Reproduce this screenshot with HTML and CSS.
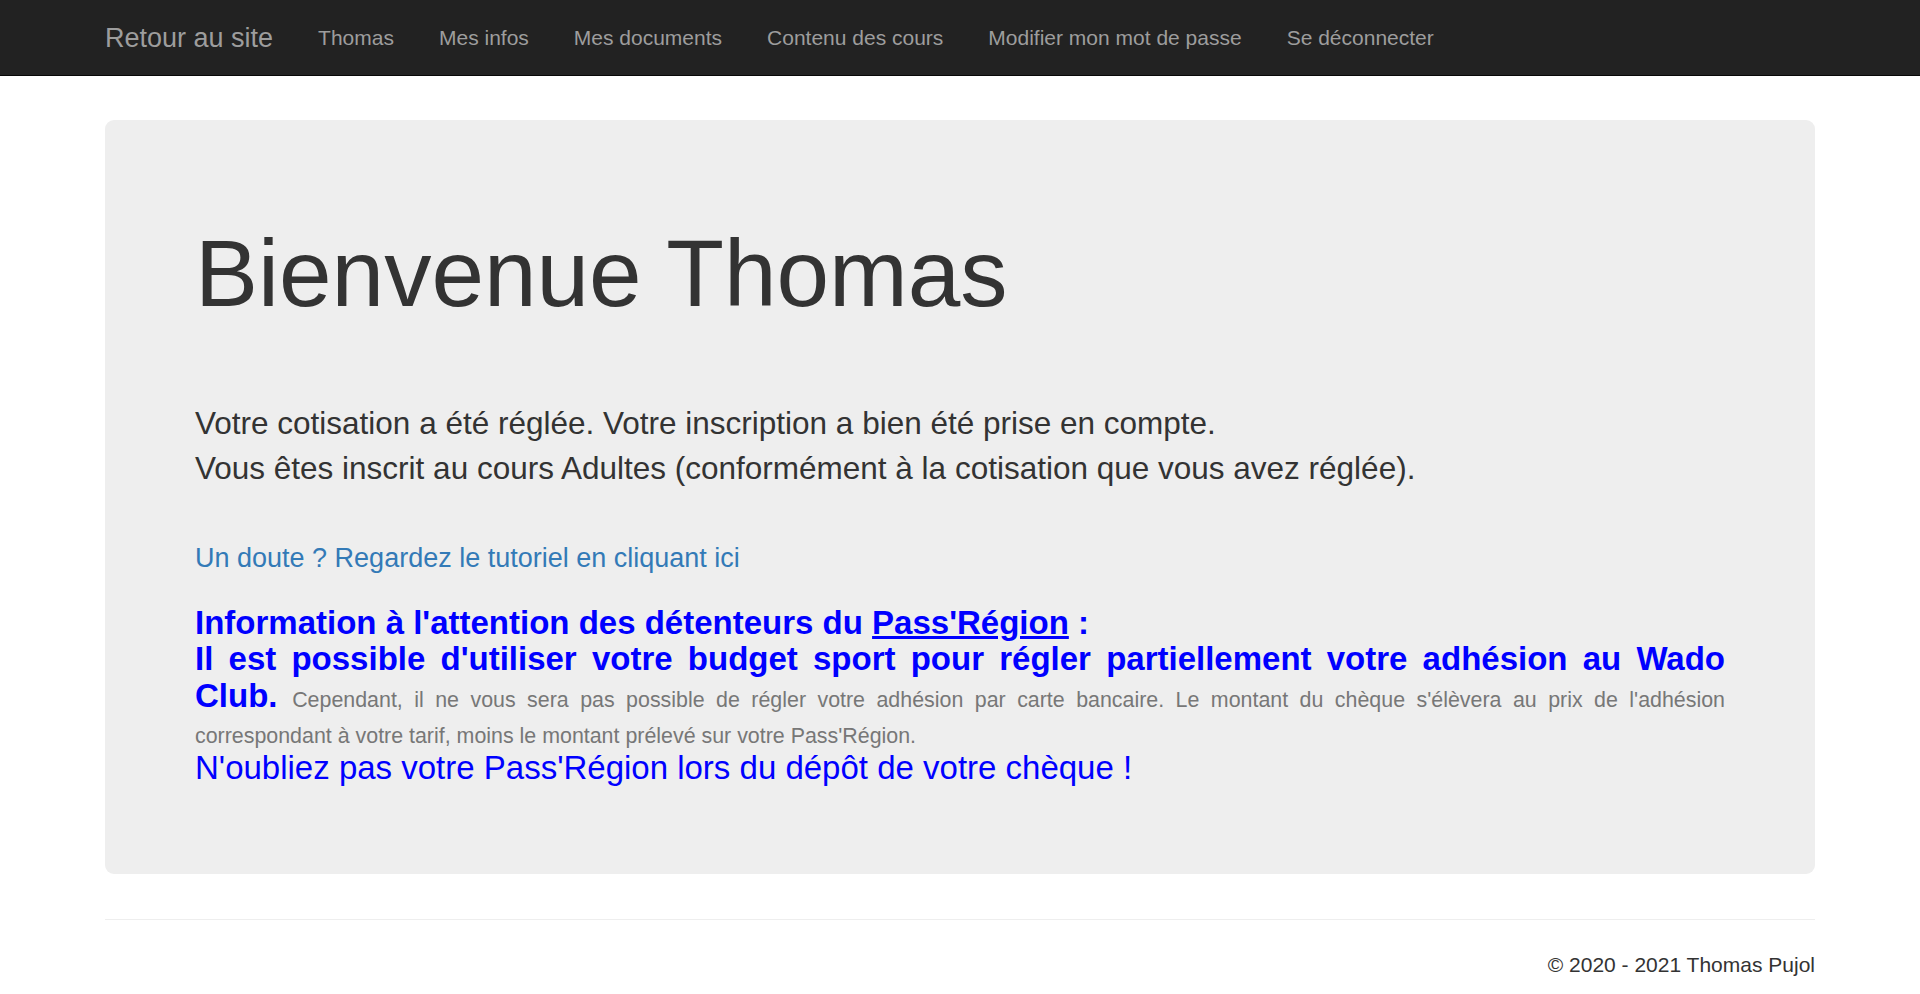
FILE: index.html
```html
<!DOCTYPE html>
<html lang="fr">
<head>
<meta charset="utf-8">
<title>Espace adhérent</title>
<link rel="stylesheet" href="styles.css">
</head>
<body>
<nav class="navbar">
  <div class="container navbar-inner">
    <a class="navbar-brand" href="#">Retour au site</a>
    <ul class="navbar-nav">
      <li><a href="#">Thomas</a></li>
      <li><a href="#">Mes infos</a></li>
      <li><a href="#">Mes documents</a></li>
      <li><a href="#">Contenu des cours</a></li>
      <li><a href="#">Modifier mon mot de passe</a></li>
      <li><a href="#">Se déconnecter</a></li>
    </ul>
  </div>
</nav>
<div class="container body-content">
  <div class="jumbotron">
    <h1 class="welcome">Bienvenue Thomas</h1>
    <p class="status">Votre cotisation a été réglée. Votre inscription a bien été prise en compte.<br>Vous êtes inscrit au cours Adultes (conformément à la cotisation que vous avez réglée).</p>
    <h4 class="tuto"><a href="#">Un doute ? Regardez le tutoriel en cliquant ici</a></h4>
    <div class="pass"><strong>Information à l'attention des détenteurs du <u>Pass'Région</u> :<br>Il est possible d'utiliser votre budget sport pour régler partiellement votre adhésion au Wado Club.</strong> <span class="pass-note">Cependant, il ne vous sera pas possible de régler votre adhésion par carte bancaire. Le montant du chèque s'élèvera au prix de l'adhésion correspondant à votre tarif, moins le montant prélevé sur votre Pass'Région.</span><br><span class="pass-reminder">N'oubliez pas votre Pass'Région lors du dépôt de votre chèque !</span></div>
  </div>
  <hr class="sep">
  <footer class="footer">
    <p>© 2020 - 2021 Thomas Pujol</p>
  </footer>
</div>
</body>
</html>
```

FILE: styles.css
```css
* {
  box-sizing: border-box;
}

html, body {
  margin: 0;
  padding: 0;
}

body {
  font-family: "Liberation Sans", Arial, Helvetica, sans-serif;
  font-size: 21px;
  line-height: 30px;
  color: #333;
  background: #fff;
}

.container {
  width: 1755px;
  margin: 0 auto;
  padding: 0 22.5px;
}

/* Navbar */
.navbar {
  background: #222;
  border-bottom: 1px solid #080808;
  height: 76px;
}

.navbar-inner {
  display: flex;
  align-items: flex-start;
  height: 75px;
}

.navbar-brand {
  display: block;
  height: 75px;
  margin-left: -22.5px;
  padding: 22.5px;
  font-size: 27px;
  line-height: 30px;
  color: #9d9d9d;
  text-decoration: none;
  white-space: nowrap;
}

.navbar-nav {
  display: flex;
  list-style: none;
  margin: 0;
  padding: 0;
}

.navbar-nav a {
  display: block;
  padding: 22.5px;
  font-size: 21px;
  line-height: 30px;
  color: #9d9d9d;
  text-decoration: none;
  white-space: nowrap;
}

/* Jumbotron */
.jumbotron {
  margin-top: 44px;
  margin-bottom: 45px;
  padding: 72px 90px;
  background: #eee;
  border-radius: 9px;
}

.welcome {
  margin: 30px 0 15px;
  font-size: 94.5px;
  line-height: 1.1;
  font-weight: 400;
  color: #333;
}

.status {
  margin: 75.5px 0 0;
  font-size: 31.5px;
  line-height: 45px;
}

.tuto {
  margin: 52.5px 0 0;
  font-size: 27px;
  line-height: 29.7px;
  font-weight: 400;
}

.tuto a {
  color: #337ab7;
  text-decoration: none;
}

.pass {
  margin: 31.3px 0 16px;
  font-size: 33px;
  line-height: 1.1;
  color: #0000ff;
  text-align: justify;
}

.pass strong {
  font-weight: 700;
}

.pass-note {
  font-size: 21.4px;
  color: #777;
}

.pass-reminder {
  font-size: 33px;
}

/* Footer */
.sep {
  height: 0;
  margin: 0 0 30px;
  border: 0;
  border-top: 1px solid #eee;
}

.footer p {
  margin: 0 0 15px;
  text-align: right;
}
```
